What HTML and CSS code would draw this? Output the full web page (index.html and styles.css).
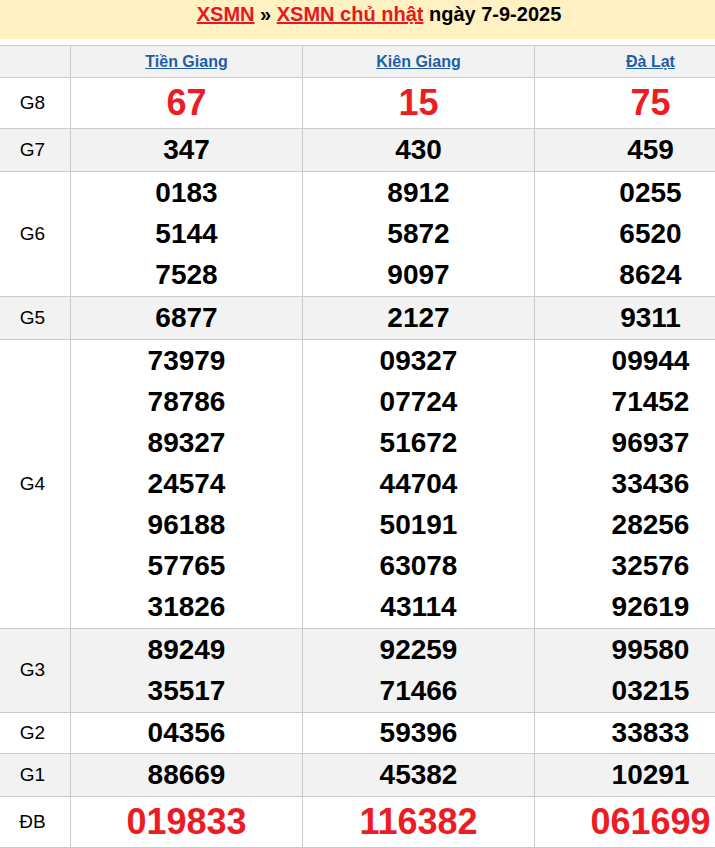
FILE: index.html
```html
<!DOCTYPE html>
<html lang="vi">
<head>
<meta charset="utf-8">
<title>XSMN chủ nhật ngày 7-9-2025</title>
<link rel="stylesheet" href="styles.css">
</head>
<body>
<div class="page">
  <h2 class="title"><a href="#" class="red-link">XSMN</a> » <a href="#" class="red-link">XSMN chủ nhật</a> ngày 7-9-2025</h2>
  <table class="result">
    <colgroup><col class="c-label"><col class="c-num"><col class="c-num"><col class="c-num"></colgroup>
    <thead>
      <tr class="grey">
        <th class="label"></th>
        <th><a href="#" class="prov">Tiền Giang</a></th>
        <th><a href="#" class="prov">Kiên Giang</a></th>
        <th><a href="#" class="prov">Đà Lạt</a></th>
      </tr>
    </thead>
    <tbody>
      <tr class="big">
        <td class="label">G8</td>
        <td><div class="n red">67</div></td>
        <td><div class="n red">15</div></td>
        <td><div class="n red">75</div></td>
      </tr>
      <tr class="grey">
        <td class="label">G7</td>
        <td><div class="n">347</div></td>
        <td><div class="n">430</div></td>
        <td><div class="n">459</div></td>
      </tr>
      <tr>
        <td class="label">G6</td>
        <td><div class="n">0183</div><div class="n">5144</div><div class="n">7528</div></td>
        <td><div class="n">8912</div><div class="n">5872</div><div class="n">9097</div></td>
        <td><div class="n">0255</div><div class="n">6520</div><div class="n">8624</div></td>
      </tr>
      <tr class="grey">
        <td class="label">G5</td>
        <td><div class="n">6877</div></td>
        <td><div class="n">2127</div></td>
        <td><div class="n">9311</div></td>
      </tr>
      <tr>
        <td class="label">G4</td>
        <td><div class="n">73979</div><div class="n">78786</div><div class="n">89327</div><div class="n">24574</div><div class="n">96188</div><div class="n">57765</div><div class="n">31826</div></td>
        <td><div class="n">09327</div><div class="n">07724</div><div class="n">51672</div><div class="n">44704</div><div class="n">50191</div><div class="n">63078</div><div class="n">43114</div></td>
        <td><div class="n">09944</div><div class="n">71452</div><div class="n">96937</div><div class="n">33436</div><div class="n">28256</div><div class="n">32576</div><div class="n">92619</div></td>
      </tr>
      <tr class="grey">
        <td class="label">G3</td>
        <td><div class="n">89249</div><div class="n">35517</div></td>
        <td><div class="n">92259</div><div class="n">71466</div></td>
        <td><div class="n">99580</div><div class="n">03215</div></td>
      </tr>
      <tr class="short">
        <td class="label">G2</td>
        <td><div class="n">04356</div></td>
        <td><div class="n">59396</div></td>
        <td><div class="n">33833</div></td>
      </tr>
      <tr class="grey">
        <td class="label">G1</td>
        <td><div class="n">88669</div></td>
        <td><div class="n">45382</div></td>
        <td><div class="n">10291</div></td>
      </tr>
      <tr class="big">
        <td class="label">ĐB</td>
        <td><div class="n red">019833</div></td>
        <td><div class="n red">116382</div></td>
        <td><div class="n red">061699</div></td>
      </tr>
    </tbody>
  </table>
</div>
</body>
</html>
```

FILE: styles.css
```css
html, body {
  margin: 0;
  padding: 0;
  background: #fff;
  overflow: hidden;
}
body {
  font-family: "Liberation Sans", Arial, sans-serif;
  color: #000;
}
.page {
  width: 758px;
}
.title {
  margin: 0 0 6px;
  height: 39px;
  box-sizing: border-box;
  padding: 0;
  background: #fff1c1;
  font-size: 20px;
  font-weight: bold;
  line-height: 28px;
  text-align: center;
}
.red-link {
  color: #e8161f;
  text-decoration: underline;
}
.result {
  width: 767px;
  table-layout: fixed;
  border-collapse: separate;
  border-spacing: 0;
  border-top: 1px solid #cbcbcb;
}
.c-label { width: 71px; }
.c-num { width: 232px; }
.result th,
.result td {
  box-sizing: border-box;
  padding: 0;
  border-right: 1px solid #cbcbcb;
  border-bottom: 1px solid #cbcbcb;
  text-align: center;
  vertical-align: middle;
}
.result th {
  height: 32px;
  font-size: 16px;
  font-weight: bold;
}
.prov {
  color: #1d5ea8;
  text-decoration: underline;
}
.grey th,
.grey td {
  background: #f2f2f2;
}
.result .label {
  font-size: 19px;
  font-weight: normal;
  padding-right: 5px;
}
.result td {
  padding-bottom: 1px;
}
.n {
  font-size: 28px;
  font-weight: bold;
  line-height: 41px;
}
.short td {
  padding-bottom: 0;
}
.short .n {
  line-height: 40px;
}
.big .n {
  font-size: 36px;
  line-height: 49px;
}
.red {
  color: #ed1c24;
}
```
